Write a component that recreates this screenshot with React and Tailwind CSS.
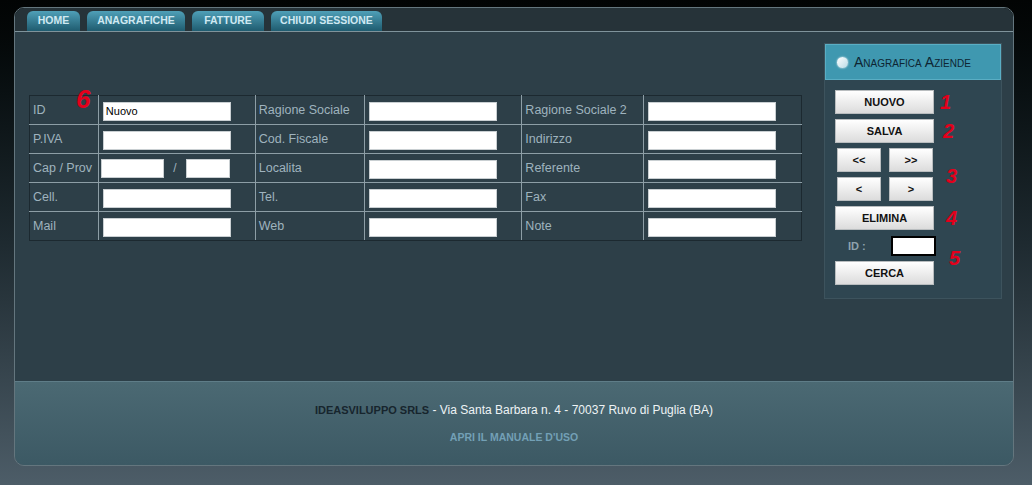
import React from "react";

const font = { fontFamily: '"Liberation Sans", Arial, sans-serif' };

const tabs = [
  { label: "HOME", w: "w-[53px]" },
  { label: "ANAGRAFICHE", w: "w-[98px]" },
  { label: "FATTURE", w: "w-[72px]" },
  { label: "CHIUDI SESSIONE", w: "w-[111px]" },
];

const Field = ({ value = "", w = "w-[128px]" }) => (
  <input
    type="text"
    defaultValue={value}
    className={`${w} h-[19px] bg-white border border-[#c9cfd2] px-[2px] text-[11px] text-black outline-none`}
  />
);

const Num = ({ n, className = "" }) => (
  <span className={`text-[20px] leading-none font-bold italic text-[#e3001b] ${className}`}>{n}</span>
);

const Btn = ({ children, w = "w-[99px]" }) => (
  <button className={`${w} h-[24px] bg-gradient-to-b from-white to-[#dcdcdc] border border-[#b9bdbf] text-[11px] font-bold text-[#111] leading-none`}>
    {children}
  </button>
);

const rows = [
  ["ID", <Field value="Nuovo" />, "Ragione Sociale", <Field />, "Ragione Sociale 2", <Field />],
  ["P.IVA", <Field />, "Cod. Fiscale", <Field />, "Indirizzo", <Field />],
  [
    "Cap / Prov",
    <div className="flex items-center -ml-[2px]">
      <Field w="w-[63px]" />
      <span className="w-[22px] text-center text-[12px] text-[#9fb3be]">/</span>
      <Field w="w-[44px]" />
    </div>,
    "Localita",
    <Field />,
    "Referente",
    <Field />,
  ],
  ["Cell.", <Field />, "Tel.", <Field />, "Fax", <Field />],
  ["Mail", <Field />, "Web", <Field />, "Note", <Field />],
];

// outer edges of the grid are dark, inner lines light
const edge = (i, j) =>
  [
    "border border-[#8d9ea6]",
    i === 0 ? "border-t-[#1c2930]" : "",
    i === rows.length - 1 ? "border-b-[#1c2930]" : "",
    j === 0 ? "border-l-[#1c2930]" : "",
    j === 5 ? "border-r-[#1c2930]" : "",
  ].join(" ");

export default function App() {
  return (
    <div style={font} className="w-[1032px] h-[485px] bg-gradient-to-b from-[#020404] via-[#1e2a30] to-[#4d5d68] pt-[7px] pl-[14px] overflow-hidden">
      <div className="w-[1000px] rounded-[10px] border border-[#64767e] overflow-hidden">
        {/* tab strip */}
        <div className="h-[24px] bg-[#263339] flex items-end gap-[7px] pl-[12px] border-b border-[#7f939b]">
          {tabs.map((t) => (
            <div
              key={t.label}
              className={`${t.w} h-[20px] rounded-t-[6px] bg-gradient-to-b from-[#4fa0b8] to-[#1f5c70] flex items-center justify-center text-[10.5px] font-bold text-[#cfe9f2]`}
            >
              {t.label}
            </div>
          ))}
        </div>

        {/* body */}
        <div className="h-[349px] bg-[#2d3f48] flex pl-[14px]">
          <table className="mt-[63px] w-[773px] h-[145px] border-collapse self-start">
            <colgroup>
              <col className="w-[69px]" />
              <col className="w-[157px]" />
              <col className="w-[110px]" />
              <col className="w-[157px]" />
              <col className="w-[122px]" />
              <col className="w-[158px]" />
            </colgroup>
            <tbody>
              {rows.map((r, i) => (
                <tr key={i} className="h-[29px]">
                  {r.map((c, j) =>
                    j % 2 === 0 ? (
                      <td key={j} className={`${edge(i, j)} px-[3px] text-[12.5px] text-[#9fb3be] align-middle relative`}>
                        {c}
                        {i === 0 && j === 0 && (
                          <Num n="6" className="absolute left-[46px] -top-[10px] !text-[26px]" />
                        )}
                      </td>
                    ) : (
                      <td key={j} className={`${edge(i, j)} pl-[4px] align-middle`}>
                        {c}
                      </td>
                    )
                  )}
                </tr>
              ))}
            </tbody>
          </table>

          {/* side panel */}
          <div className="ml-[22px] mt-[11px] w-[178px] h-[256px] bg-[#2f4651] border border-[#3d535d] self-start">
            <div className="h-[36px] bg-[#3f98b0] border border-[#5aaec4] flex items-center pl-[11px] gap-[6px]">
              <span className="w-[11px] h-[11px] rounded-full bg-gradient-to-br from-white to-[#b9dbe6] shadow-[0_0_2px_#ffffff]" />
              <span className="text-[14px] text-[#0e2532]" style={{ fontVariant: "small-caps" }}>
                Anagrafica Aziende
              </span>
            </div>
            <div className="pl-[10px] pt-[10px] flex flex-col gap-[5px]">
              <div className="flex items-center gap-[6px]">
                <Btn>NUOVO</Btn>
                <Num n="1" />
              </div>
              <div className="flex items-center gap-[9px]">
                <Btn>SALVA</Btn>
                <Num n="2" />
              </div>
              <div className="flex items-center">
                <div className="flex flex-col gap-[5px] pl-[2px]">
                  <div className="flex gap-[8px]">
                    <Btn w="w-[44px]">&lt;&lt;</Btn>
                    <Btn w="w-[44px]">&gt;&gt;</Btn>
                  </div>
                  <div className="flex gap-[8px]">
                    <Btn w="w-[44px]">&lt;</Btn>
                    <Btn w="w-[44px]">&gt;</Btn>
                  </div>
                </div>
                <Num n="3" className="ml-[13px] mt-[2px]" />
              </div>
              <div className="flex items-center gap-[12px]">
                <Btn>ELIMINA</Btn>
                <Num n="4" />
              </div>
              <div className="flex items-center">
                <div className="flex flex-col gap-[6px]">
                  <div className="flex items-center h-[20px] pt-[2px]">
                    <span className="w-[56px] pl-[13px] text-[11px] font-bold text-[#8ea2ad]">ID :</span>
                    <input type="text" className="w-[45px] h-[20px] bg-white border-2 border-black outline-none" />
                  </div>
                  <Btn>CERCA</Btn>
                </div>
                <Num n="5" className="ml-[13px] -mt-[4px]" />
              </div>
            </div>
          </div>
        </div>

        {/* footer */}
        <div className="h-[84px] border-t border-[#5f7d88] bg-gradient-to-b from-[#4b6973] to-[#3c5964] flex flex-col items-center pt-[19px]">
          <div className="text-[12px]">
            <span className="text-[11px] font-bold text-[#17252d]">IDEASVILUPPO SRLS</span>
            <span className="text-[#eef3f5]"> - Via Santa Barbara n. 4 - 70037 Ruvo di Puglia (BA)</span>
          </div>
          <div className="mt-[11px] text-[10.5px] font-bold text-[#73a0b6]">APRI IL MANUALE D'USO</div>
        </div>
      </div>
    </div>
  );
}
